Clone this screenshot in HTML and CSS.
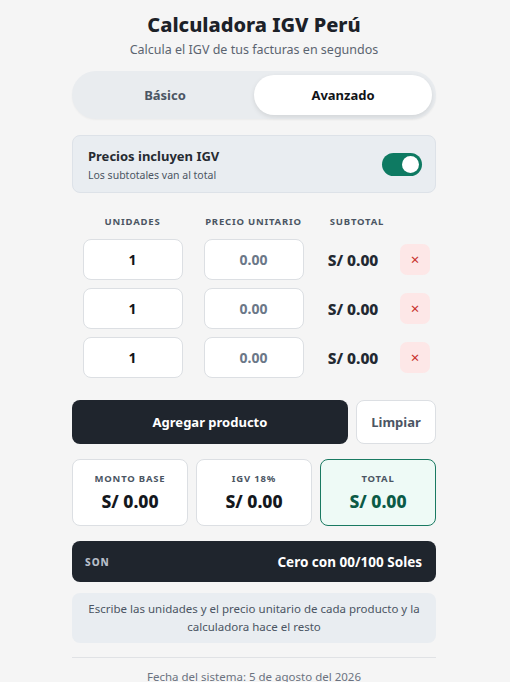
FILE: index.html
```html
<!DOCTYPE html>
<html lang="es">
<head>
<meta charset="utf-8">
<title>Calculadora IGV Perú</title>
<link rel="stylesheet" href="styles.css">
</head>
<body>
<main class="app">
  <header class="head">
    <h1 class="title">Calculadora IGV Perú</h1>
    <p class="subtitle">Calcula el IGV de tus facturas en segundos</p>
  </header>

  <div class="tabs">
    <button class="tab">Básico</button>
    <button class="tab tab-active">Avanzado</button>
  </div>

  <div class="option">
    <div class="option-text">
      <div class="option-title">Precios incluyen IGV</div>
      <div class="option-sub">Los subtotales van al total</div>
    </div>
    <div class="switch"><span class="knob"></span></div>
  </div>

  <div class="grid">
    <div class="th">UNIDADES</div>
    <div class="th">PRECIO UNITARIO</div>
    <div class="th">SUBTOTAL</div>
    <div class="th"></div>

    <div class="cell"><div class="inp inp-qty">1</div></div>
    <div class="cell"><div class="inp inp-price">0.00</div></div>
    <div class="cell sub">S/ 0.00</div>
    <div class="cell"><button class="del">×</button></div>

    <div class="cell"><div class="inp inp-qty">1</div></div>
    <div class="cell"><div class="inp inp-price">0.00</div></div>
    <div class="cell sub">S/ 0.00</div>
    <div class="cell"><button class="del">×</button></div>

    <div class="cell"><div class="inp inp-qty">1</div></div>
    <div class="cell"><div class="inp inp-price">0.00</div></div>
    <div class="cell sub">S/ 0.00</div>
    <div class="cell"><button class="del">×</button></div>
  </div>

  <div class="actions">
    <button class="btn-primary">Agregar producto</button>
    <button class="btn-secondary">Limpiar</button>
  </div>

  <div class="cards">
    <div class="card">
      <div class="card-label">MONTO BASE</div>
      <div class="card-value">S/ 0.00</div>
    </div>
    <div class="card">
      <div class="card-label">IGV 18%</div>
      <div class="card-value">S/ 0.00</div>
    </div>
    <div class="card card-total">
      <div class="card-label">TOTAL</div>
      <div class="card-value">S/ 0.00</div>
    </div>
  </div>

  <div class="son">
    <span class="son-label">SON</span>
    <span class="son-value">Cero con 00/100 Soles</span>
  </div>

  <div class="info">Escribe las unidades y el precio unitario de cada producto y la calculadora hace el resto</div>

  <footer class="foot">Fecha del sistema: 5 de agosto del 2026</footer>
</main>
</body>
</html>
```

FILE: styles.css
```css
* { box-sizing: border-box; }
html, body { margin: 0; padding: 0; }
body {
  background: #f5f5f5;
  font-family: "Noto Sans", "Open Sans", sans-serif;
  color: #1f2328;
}
.app {
  width: 364px;
  margin-left: calc(50% - 183px);
  padding-top: 10px;
}
.head { text-align: center; }
.title {
  margin: 0;
  font-size: 20px;
  font-weight: 800;
  line-height: 30px;
  color: #1c2128;
}
.subtitle {
  margin: 1px 0 0;
  font-size: 12.5px;
  line-height: 18px;
  color: #5b6470;
}
.tabs {
  margin-top: 12px;
  height: 48px;
  border-radius: 24px;
  background: #e9ecef;
  padding: 4px;
  display: flex;
  box-shadow: 0 1px 2px rgba(0,0,0,0.04);
}
.tab {
  flex: 1;
  border: 0;
  background: transparent;
  border-radius: 20px;
  font-family: inherit;
  font-size: 13px;
  font-weight: 700;
  color: #4b5563;
}
.tab-active {
  background: #fff;
  color: #111418;
  box-shadow: 0 2px 5px rgba(0,0,0,0.10);
}
.option {
  margin-top: 16px;
  height: 58px;
  background: #e9edf1;
  border: 1px solid #dde2e8;
  border-radius: 8px;
  padding: 0 13px 0 15px;
  display: flex;
  align-items: center;
  justify-content: space-between;
}
.option-title {
  font-size: 13px;
  font-weight: 700;
  color: #262b31;
  line-height: 18px;
}
.option-sub {
  font-size: 10.5px;
  color: #4b5563;
  margin-top: 3px;
  line-height: 14px;
}
.switch {
  width: 40px;
  height: 23px;
  border-radius: 12px;
  background: #0e7a62;
  position: relative;
}
.knob {
  position: absolute;
  right: 3px;
  top: 3px;
  width: 17px;
  height: 17px;
  border-radius: 50%;
  background: #fff;
}
.grid {
  margin-top: 22px;
  display: grid;
  grid-template-columns: 121px 121px 1fr 30px;
  grid-template-rows: 16px 41px 41px 41px;
  row-gap: 8px;
  padding-right: 6px;
  align-items: center;
}
.th {
  text-align: center;
  font-size: 9.5px;
  font-weight: 700;
  letter-spacing: 0.8px;
  color: #4b5563;
  align-self: start;
}
.cell { display: flex; justify-content: center; align-items: center; }
.inp {
  width: 100px;
  height: 41px;
  background: #fff;
  border: 1px solid #dcdfe3;
  border-radius: 8px;
  display: flex;
  align-items: center;
  justify-content: center;
  font-size: 14px;
  font-weight: 700;
}
.inp-qty { color: #111418; }
.inp-price { color: #6b7888; }
.sub {
  font-size: 15.5px;
  font-weight: 800;
  color: #222831;
  padding-right: 8px;
}
.del {
  width: 32px;
  height: 31px;
  border: 0;
  border-radius: 7px;
  background: #fde7e7;
  color: #c8302a;
  font-size: 15px;
  line-height: 1;
  padding: 0;
  font-family: inherit;
}
.actions {
  margin-top: 22px;
  display: flex;
  gap: 8px;
  height: 44px;
}
.btn-primary {
  flex: 1;
  border: 0;
  border-radius: 8px;
  background: #1f252d;
  color: #fff;
  font-family: inherit;
  font-size: 13px;
  font-weight: 700;
}
.btn-secondary {
  width: 80px;
  border: 1px solid #dcdfe3;
  border-radius: 8px;
  background: #fff;
  color: #4b5563;
  font-family: inherit;
  font-size: 13px;
  font-weight: 700;
}
.cards {
  margin-top: 15px;
  display: grid;
  grid-template-columns: 1fr 1fr 1fr;
  gap: 8px;
}
.card {
  height: 67px;
  background: #fff;
  border: 1px solid #dcdfe3;
  border-radius: 8px;
  display: flex;
  flex-direction: column;
  align-items: center;
  justify-content: center;
  gap: 4px;
}
.card-label {
  font-size: 9.5px;
  font-weight: 700;
  letter-spacing: 0.8px;
  color: #4b5563;
}
.card-value {
  font-size: 17.5px;
  font-weight: 800;
  line-height: 24px;
  color: #14181d;
}
.card-total {
  background: #eefaf6;
  border-color: #1a7a62;
}
.card-total .card-value { color: #0b5a46; }
.son {
  margin-top: 15px;
  height: 41px;
  background: #1f252d;
  border-radius: 8px;
  display: flex;
  align-items: center;
  justify-content: space-between;
  padding: 0 14px 0 13px;
}
.son-label {
  font-size: 10px;
  font-weight: 800;
  letter-spacing: 1px;
  color: #b7bec8;
}
.son-value {
  font-size: 13.5px;
  font-weight: 700;
  color: #fff;
}
.info {
  margin-top: 11px;
  background: #e9edf1;
  border-radius: 8px;
  padding: 7px 16px;
  text-align: center;
  font-size: 11.5px;
  line-height: 18px;
  color: #4b5563;
}
.foot {
  margin-top: 14px;
  border-top: 1px solid #e0e2e5;
  padding-top: 11px;
  text-align: center;
  font-size: 11.5px;
  color: #6b7280;
}
```
